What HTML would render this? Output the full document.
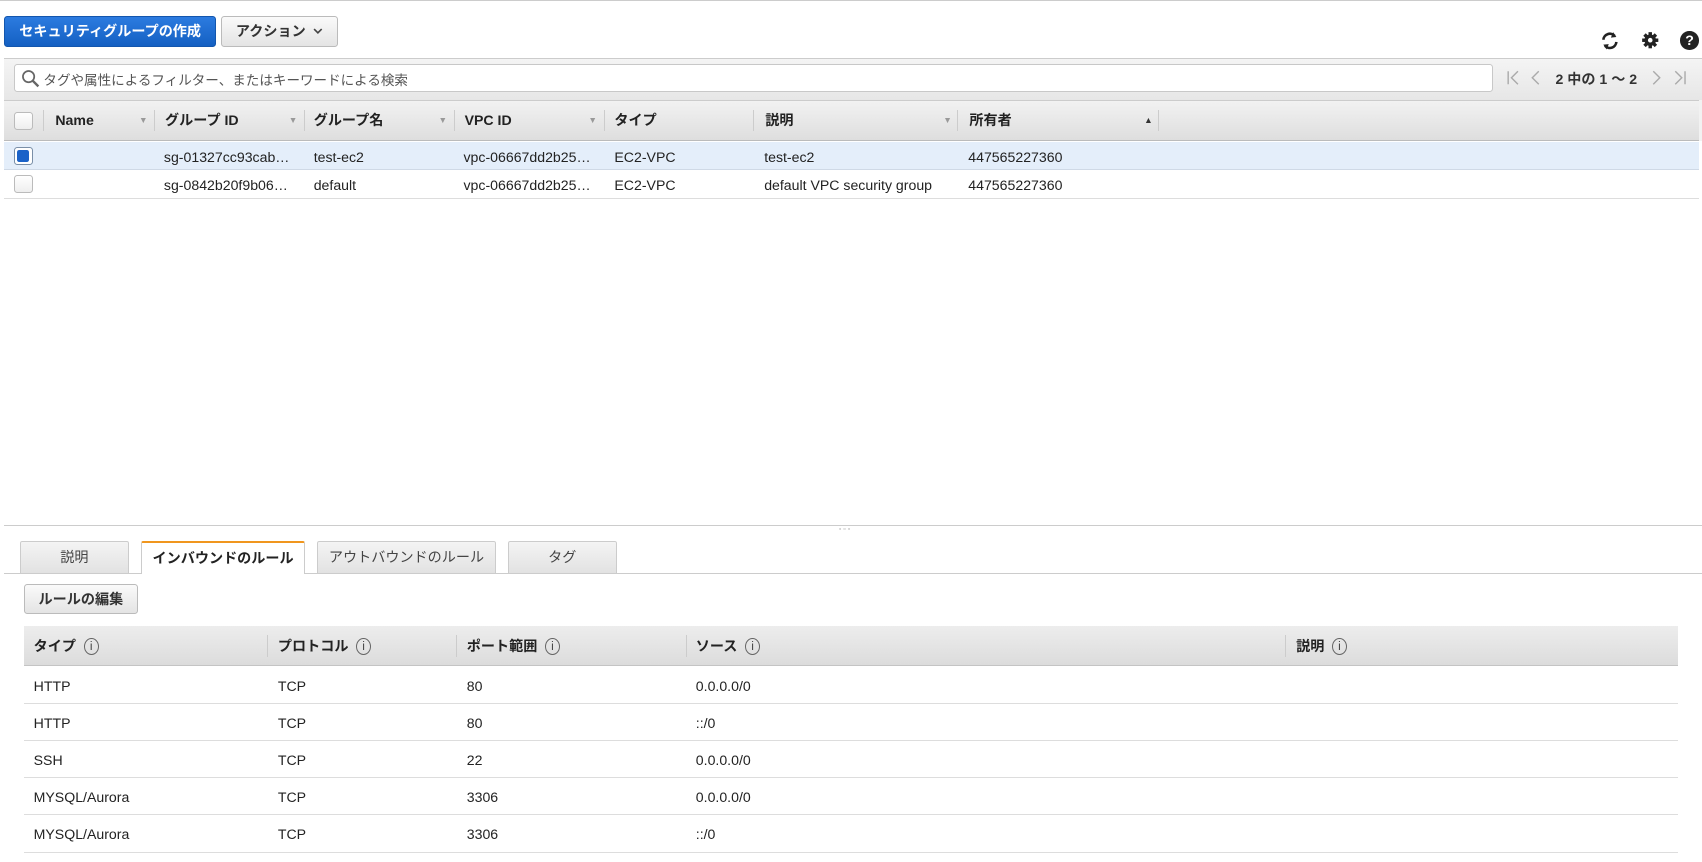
<!DOCTYPE html>
<html><head><meta charset="utf-8"><style>
html,body{margin:0;padding:0;background:#fff;overflow:hidden}
#w{zoom:1.0855;width:1568px;height:794px;position:relative;font-family:"Liberation Sans","Noto Sans CJK JP",sans-serif;font-size:13px;color:#222}
.a{position:absolute}
.btn{position:absolute;border-radius:3px;font-weight:bold;font-size:13px;display:flex;align-items:center;justify-content:center;box-sizing:border-box}
.cb{position:absolute;width:14px;height:14px;border:1px solid #bbb;border-radius:3px;background:linear-gradient(#fff,#eee);box-sizing:border-box}
.hd{position:absolute;top:92px;height:38px;line-height:38px;font-weight:bold;font-size:13px}
.hb{position:absolute;top:577px;height:37px;font-weight:bold;font-size:13px;display:flex;align-items:center}
.sep{position:absolute;width:1px;background:#ccc}
.tri{position:absolute;font-size:8px;color:#999;top:106px}
.cell{position:absolute;font-size:13px}
.tab{position:absolute;top:498px;height:30px;box-sizing:border-box;border:1px solid #ccc;border-bottom:none;background:linear-gradient(#f4f4f4,#e2e2e2);display:flex;align-items:center;justify-content:center;font-size:13px;color:#444;border-radius:2px 2px 0 0}
.ic{display:inline-block;width:14px;height:16px;border:1px solid #666;border-radius:50%;font-size:11px;line-height:14px;text-align:center;font-weight:normal;margin-left:7px;box-sizing:border-box;color:#444}
.hline{position:absolute;height:1px;background:#ddd;left:22px;width:1524px}
.pg{position:absolute;top:63px}
</style></head><body><div id="w">
<div class="a" style="left:0;top:0;width:1568px;height:1px;background:#ccc"></div>
<div class="btn" style="left:4px;top:15px;width:195px;height:28px;background:linear-gradient(#2c7be0,#1460c2);border:1px solid #1356ad;color:#fff">セキュリティグループの作成</div>
<div class="btn" style="left:204px;top:15px;width:107px;height:28px;background:linear-gradient(#fafafa,#e4e4e4);border:1px solid #bbb;color:#333">アクション <svg style="margin-left:7px" width="9" height="6" viewBox="0 0 9 6"><path d="M1 1l3.5 3.5L8 1" stroke="#444" stroke-width="1.5" fill="none"/></svg></div>
<svg class="a" style="left:1473px;top:28px" width="20" height="20" viewBox="0 0 20 20"><path d="M4 9a6 6 0 0 1 10.5-3.5" stroke="#222" stroke-width="2.4" fill="none"/><path d="M13 2l3 4.5-5 .5z" fill="#222"/><path d="M16 11a6 6 0 0 1-10.5 3.5" stroke="#222" stroke-width="2.4" fill="none"/><path d="M7 18l-3-4.5 5-.5z" fill="#222"/></svg>
<svg class="a" style="left:1512px;top:29px" width="17" height="17" viewBox="0 0 16 16"><g fill="#222"><circle cx="8" cy="8" r="5"/><rect x="6.5" y="1" width="3" height="14"/><rect x="1" y="6.5" width="14" height="3"/><rect x="6.5" y="1" width="3" height="14" transform="rotate(45 8 8)"/><rect x="6.5" y="1" width="3" height="14" transform="rotate(-45 8 8)"/></g><circle cx="8" cy="8" r="2" fill="#fff"/></svg>
<div class="a" style="left:1548px;top:29px;width:17px;height:17px;border-radius:50%;background:#222;color:#fff;font-weight:bold;font-size:13px;line-height:17px;text-align:center">?</div>
<div class="a" style="left:4px;top:53px;width:1564px;height:39px;background:linear-gradient(#f4f4f4,#e6e6e6);border-top:1px solid #ccc"></div>
<div class="a" style="left:13px;top:59px;width:1362px;height:26px;background:#fff;border:1px solid #c8c8c8;border-radius:3px;box-sizing:border-box"></div>
<svg class="a" style="left:19px;top:64px" width="18" height="18" viewBox="0 0 18 18"><circle cx="7" cy="7" r="5.2" stroke="#666" stroke-width="1.6" fill="none"/><path d="M11 11l5 5" stroke="#666" stroke-width="2.2"/></svg>
<div class="a" style="left:40px;top:64px;font-size:12.5px;color:#555">タグや属性によるフィルター、またはキーワードによる検索</div>
<svg class="pg" style="left:1387px" width="14" height="18" viewBox="0 0 14 18"><path d="M2 3v12M11 3L5 9l6 6" stroke="#aaa" stroke-width="1.3" fill="none"/></svg>
<svg class="pg" style="left:1409px" width="12" height="18" viewBox="0 0 12 18"><path d="M9 3L3 9l6 6" stroke="#aaa" stroke-width="1.3" fill="none"/></svg>
<div class="a" style="left:1433px;top:64px;font-weight:bold;font-size:13px;color:#333">2 中の 1 ～ 2</div>
<svg class="pg" style="left:1520px" width="12" height="18" viewBox="0 0 12 18"><path d="M3 3l6 6-6 6" stroke="#aaa" stroke-width="1.3" fill="none"/></svg>
<svg class="pg" style="left:1540px" width="14" height="18" viewBox="0 0 14 18"><path d="M3 3l6 6-6 6M12 3v12" stroke="#aaa" stroke-width="1.3" fill="none"/></svg>
<div class="a" style="left:4px;top:92px;width:1561px;height:38px;background:linear-gradient(#f2f2f2,#dedede);border-top:1px solid #ccc;border-bottom:1px solid #bbb;box-sizing:border-box"></div>
<div class="a" style="left:1565px;top:92px;width:3px;height:38px;background:#f2f2f2"></div>
<div class="cb" style="left:13px;top:103px;width:17px;height:17px"></div>
<div class="sep" style="left:40px;top:101px;height:20px"></div>
<div class="hd" style="left:51px">Name</div><div class="tri" style="left:128px">▼</div><div class="sep" style="left:142px;top:101px;height:20px"></div>
<div class="hd" style="left:152px">グループ ID</div><div class="tri" style="left:266px">▼</div><div class="sep" style="left:280px;top:101px;height:20px"></div>
<div class="hd" style="left:289px">グループ名</div><div class="tri" style="left:404px">▼</div><div class="sep" style="left:418px;top:101px;height:20px"></div>
<div class="hd" style="left:428px">VPC ID</div><div class="tri" style="left:542px">▼</div><div class="sep" style="left:556px;top:101px;height:20px"></div>
<div class="hd" style="left:566px">タイプ</div><div class="sep" style="left:694px;top:101px;height:20px"></div>
<div class="hd" style="left:705px">説明</div><div class="tri" style="left:869px">▼</div><div class="sep" style="left:882px;top:101px;height:20px"></div>
<div class="hd" style="left:893px">所有者</div><div class="tri" style="left:1054px;color:#333">▲</div><div class="sep" style="left:1067px;top:101px;height:20px"></div>
<div class="a" style="left:4px;top:131px;width:1561px;height:26px;background:#e4eefa;border-bottom:1px solid #cfd9e6;box-sizing:border-box"></div>
<div class="a" style="left:4px;top:157px;width:1561px;height:26px;border-bottom:1px solid #ddd;box-sizing:border-box"></div>
<div class="cb" style="left:13px;top:135px;width:17px;height:17px;border-color:#7a8fa8;background:#fff"></div><div class="a" style="left:16px;top:138px;width:11px;height:11px;background:#1a62c8;border-radius:2px"></div>
<div class="cb" style="left:13px;top:161px;width:17px;height:17px"></div>
<div class="cell" style="left:151px;top:137px">sg-01327cc93cab…</div><div class="cell" style="left:289px;top:137px">test-ec2</div><div class="cell" style="left:427px;top:137px">vpc-06667dd2b25…</div><div class="cell" style="left:566px;top:137px">EC2-VPC</div><div class="cell" style="left:704px;top:137px">test-ec2</div><div class="cell" style="left:892px;top:137px">447565227360</div>
<div class="cell" style="left:151px;top:163px">sg-0842b20f9b06…</div><div class="cell" style="left:289px;top:163px">default</div><div class="cell" style="left:427px;top:163px">vpc-06667dd2b25…</div><div class="cell" style="left:566px;top:163px">EC2-VPC</div><div class="cell" style="left:704px;top:163px">default VPC security group</div><div class="cell" style="left:892px;top:163px">447565227360</div>
<div class="a" style="left:4px;top:484px;width:1564px;height:1px;background:#ccc"></div>
<div class="a" style="left:773px;top:485px;font-size:6px;color:#999;letter-spacing:2px">▫▫▫</div>
<div class="a" style="left:4px;top:528px;width:1564px;height:1px;background:#ccc"></div>
<div class="tab" style="left:18px;width:101px">説明</div>
<div class="tab" style="left:130px;width:151px;height:31px;background:#fff;border-top:2px solid #f0961e;font-weight:bold;color:#222">インバウンドのルール</div>
<div class="tab" style="left:292px;width:165px">アウトバウンドのルール</div>
<div class="tab" style="left:468px;width:100px">タグ</div>
<div class="btn" style="left:22px;top:538px;width:105px;height:28px;background:linear-gradient(#fafafa,#e4e4e4);border:1px solid #bbb;color:#333">ルールの編集</div>
<div class="a" style="left:22px;top:577px;width:1524px;height:37px;background:linear-gradient(#ededed,#dcdcdc);border-bottom:1px solid #c4c4c4;box-sizing:border-box"></div>
<div class="hb" style="left:31px">タイプ<span class="ic">i</span></div><div class="sep" style="left:246px;top:585px;height:20px"></div>
<div class="hb" style="left:256px">プロトコル<span class="ic">i</span></div><div class="sep" style="left:420px;top:585px;height:20px"></div>
<div class="hb" style="left:430px">ポート範囲<span class="ic">i</span></div><div class="sep" style="left:632px;top:585px;height:20px"></div>
<div class="hb" style="left:641px">ソース<span class="ic">i</span></div><div class="sep" style="left:1184px;top:585px;height:20px"></div>
<div class="hb" style="left:1194px">説明<span class="ic">i</span></div>
<div class="cell" style="left:31px;top:625px">HTTP</div><div class="cell" style="left:256px;top:625px">TCP</div><div class="cell" style="left:430px;top:625px">80</div><div class="cell" style="left:641px;top:625px">0.0.0.0/0</div><div class="hline" style="top:648px"></div>
<div class="cell" style="left:31px;top:659px">HTTP</div><div class="cell" style="left:256px;top:659px">TCP</div><div class="cell" style="left:430px;top:659px">80</div><div class="cell" style="left:641px;top:659px">::/0</div><div class="hline" style="top:682px"></div>
<div class="cell" style="left:31px;top:693px">SSH</div><div class="cell" style="left:256px;top:693px">TCP</div><div class="cell" style="left:430px;top:693px">22</div><div class="cell" style="left:641px;top:693px">0.0.0.0/0</div><div class="hline" style="top:716px"></div>
<div class="cell" style="left:31px;top:727px">MYSQL/Aurora</div><div class="cell" style="left:256px;top:727px">TCP</div><div class="cell" style="left:430px;top:727px">3306</div><div class="cell" style="left:641px;top:727px">0.0.0.0/0</div><div class="hline" style="top:750px"></div>
<div class="cell" style="left:31px;top:761px">MYSQL/Aurora</div><div class="cell" style="left:256px;top:761px">TCP</div><div class="cell" style="left:430px;top:761px">3306</div><div class="cell" style="left:641px;top:761px">::/0</div><div class="hline" style="top:785px"></div>
</div></body></html>
